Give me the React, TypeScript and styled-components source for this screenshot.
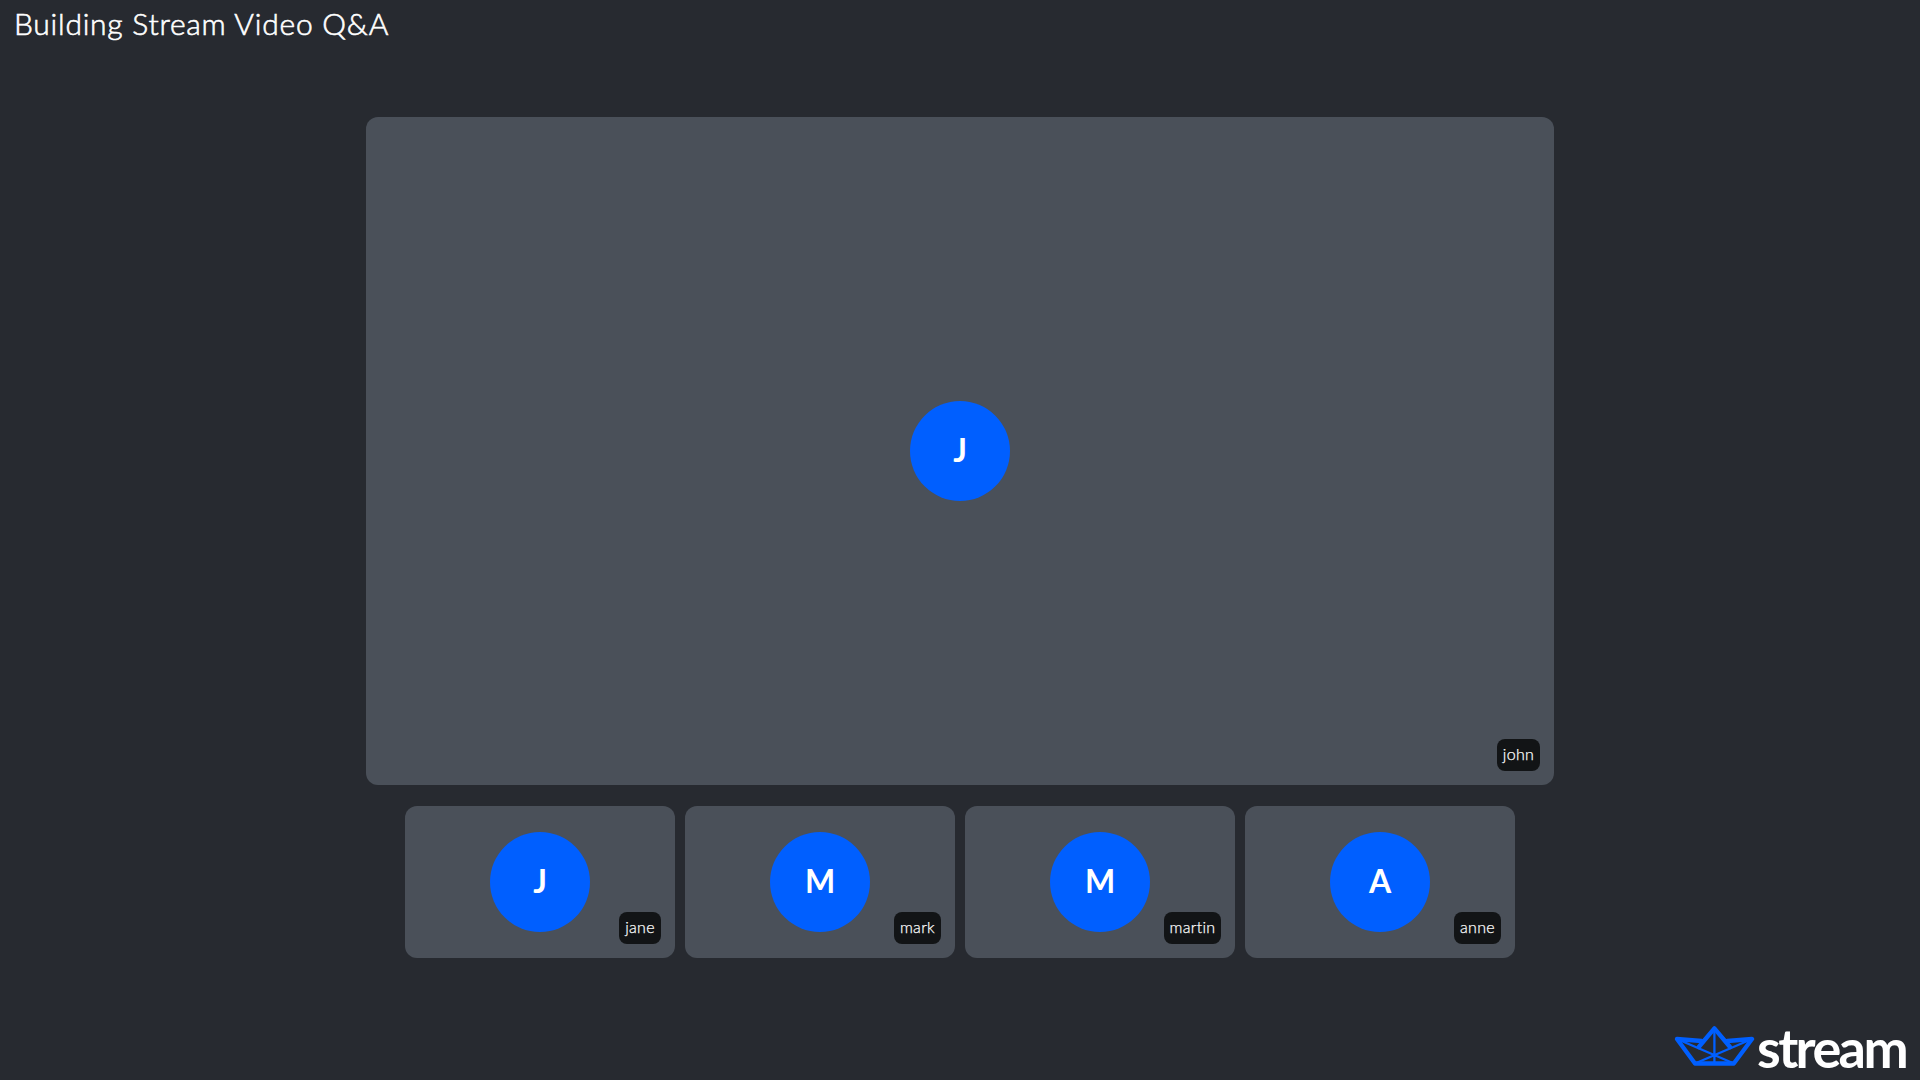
import React from "react";
import styled, { createGlobalStyle } from "styled-components";

const GlobalStyle = createGlobalStyle`
  *, *::before, *::after { box-sizing: border-box; }
  body { margin: 0; background: #272a30; }
`;

const Stage = styled.main`
  display: flex;
  flex-direction: column;
  align-items: center;
  height: 1080px;
  background: #272a30;
  color: #fff;
  font-family: Lato, "Open Sans", sans-serif;
  overflow: hidden;
`;

const Header = styled.header`
  align-self: stretch;
  height: 117px;
  padding: 5px 14px;
`;

const Title = styled.h1`
  margin: 0;
  font-size: 30px;
  line-height: 37px;
  font-weight: 300;
  letter-spacing: 0.75px;
  -webkit-text-stroke: 0.6px #fff;
  white-space: nowrap;
`;

const Tile = styled.section<{ $width: number; $height: number }>`
  position: relative;
  display: flex;
  align-items: center;
  justify-content: center;
  width: ${(p) => p.$width}px;
  height: ${(p) => p.$height}px;
  border-radius: 12px;
  background: #4a5059;
`;

const Strip = styled.div`
  display: flex;
  gap: 10px;
  margin-top: 21px;
`;

const Avatar = styled.div`
  display: flex;
  align-items: center;
  justify-content: center;
  width: 100px;
  height: 100px;
  padding-bottom: 2px;
  border-radius: 50%;
  background: #005fff;
  font-size: 32px;
  line-height: 38px;
  font-weight: 700;
`;

const NameTag = styled.span<{ $width: number }>`
  position: absolute;
  right: 14px;
  bottom: 14px;
  display: flex;
  align-items: center;
  justify-content: center;
  width: ${(p) => p.$width}px;
  height: 32px;
  padding-bottom: 2px;
  border-radius: 8px;
  background: #121416;
  font-size: 16px;
  line-height: 20px;
  font-weight: 300;
  letter-spacing: 0.3px;
  -webkit-text-stroke: 0.25px #fff;
  color: #fff;
`;

const Footer = styled.footer`
  display: flex;
  align-self: flex-end;
  align-items: flex-start;
  gap: 2px;
  margin-top: 61px;
  padding-right: 13px;
  height: 61px;
`;

const Boat = styled.svg`
  display: block;
  width: 82px;
  height: 44px;
  margin-top: 5px;
`;

const Wordmark = styled.span`
  width: 150px;
  font-size: 54px;
  line-height: 57px;
  font-weight: 700;
  letter-spacing: -2.6px;
  white-space: nowrap;
`;

const participants = [
  { name: "jane", tag: 42 },
  { name: "mark", tag: 47 },
  { name: "martin", tag: 57 },
  { name: "anne", tag: 47 },
];

interface ParticipantProps {
  name: string;
  tag: number;
  width: number;
  height: number;
}

function Participant({ name, tag, width, height }: ParticipantProps) {
  return (
    <Tile $width={width} $height={height}>
      <Avatar>{name[0].toUpperCase()}</Avatar>
      <NameTag $width={tag}>{name}</NameTag>
    </Tile>
  );
}

export default function App() {
  return (
    <>
      <GlobalStyle />
      <Stage>
        <Header>
          <Title>Building Stream Video Q&amp;A</Title>
        </Header>
        <Participant name="john" tag={43} width={1188} height={668} />
        <Strip>
          {participants.map((p) => (
            <Participant key={p.name} name={p.name} tag={p.tag} width={270} height={152} />
          ))}
        </Strip>
        <Footer>
          <Boat viewBox="0 0 82 44" fill="none" stroke="#005fff" strokeLinejoin="round" strokeLinecap="round">
            <path d="M28.500 17 4 15 22 39.500H60.800L79 15 54.300 17" strokeWidth="4.300" />
            <path d="M25.800 23 41.400 4.300 57 23" strokeWidth="4.300" />
            <path d="M41.400 5V39M4 15 61 39.500M79 15 22 39.500" strokeWidth="2.300" />
          </Boat>
          <Wordmark>stream</Wordmark>
        </Footer>
      </Stage>
    </>
  );
}
